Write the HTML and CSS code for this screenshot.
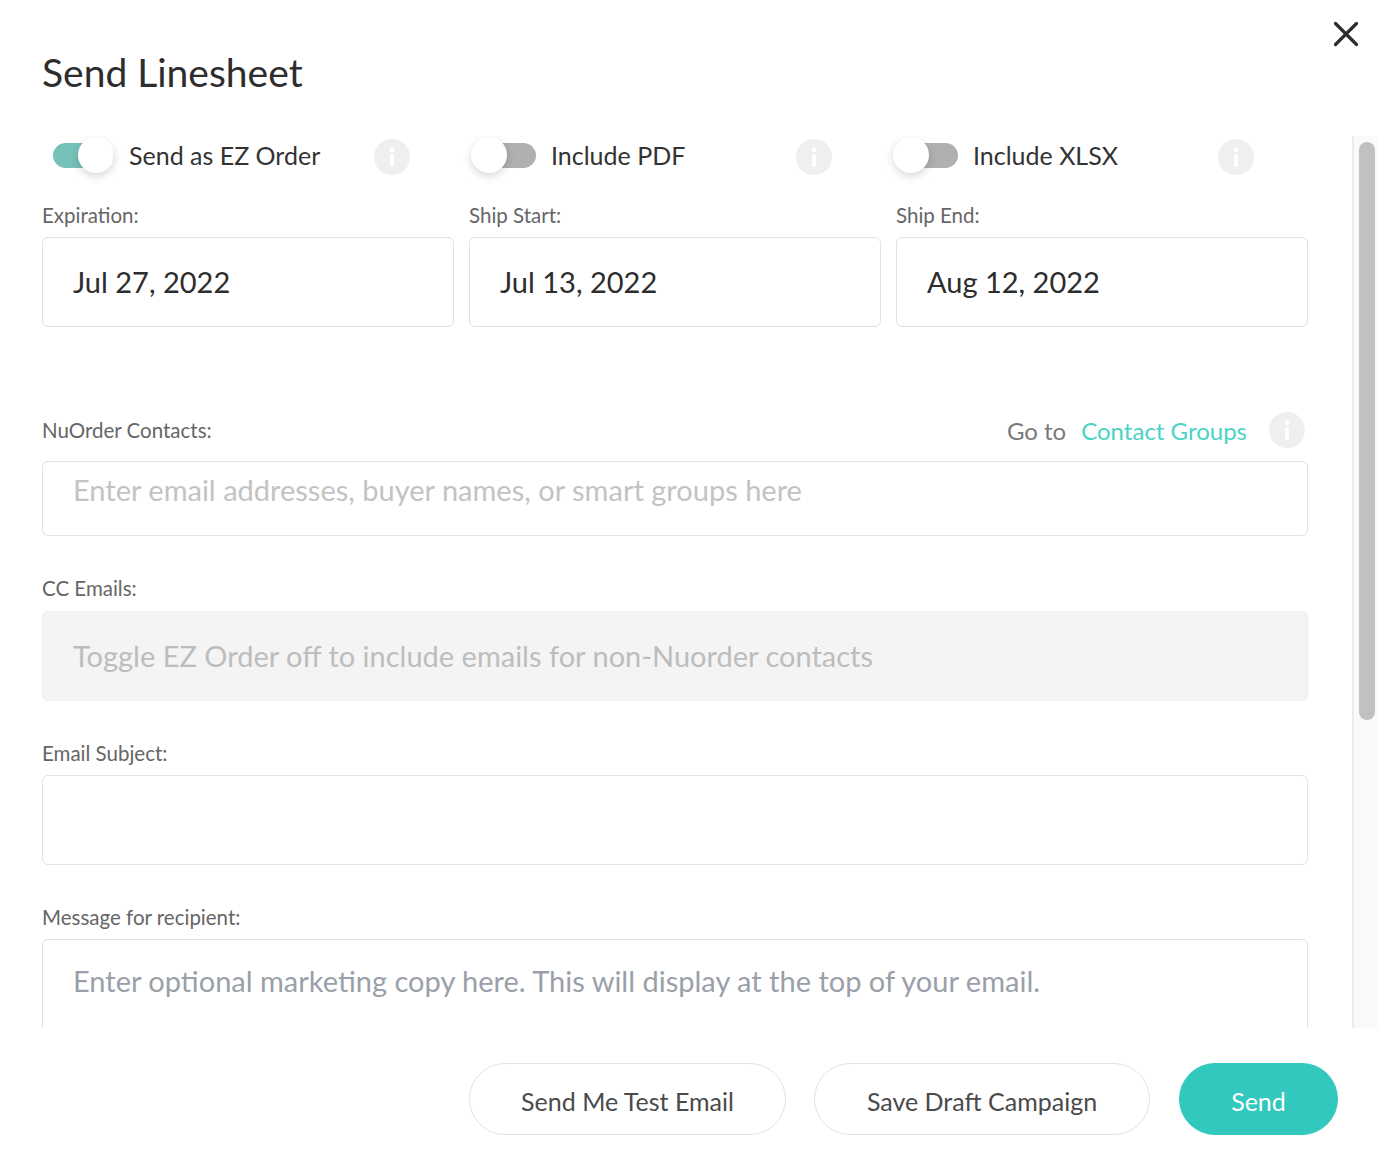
FILE: index.html
```html
<!DOCTYPE html>
<html lang="en">
<head>
<meta charset="utf-8">
<title>Send Linesheet</title>
<link rel="stylesheet" href="styles.css">
</head>
<body>
<div class="modal">
  <button class="close" aria-label="Close">
    <svg width="26" height="26" viewBox="0 0 26 26"><path d="M2.5 2.5 23.5 23.5M23.5 2.5 2.5 23.5" stroke="#2d2d2d" stroke-width="3.2" fill="none" stroke-linecap="round"/></svg>
  </button>
  <h1 class="title">Send Linesheet</h1>
  <div class="scroller">
    <div class="content">
      <div class="toggles">
        <div class="toggle-item">
          <span class="switch on"><span class="knob"></span></span>
          <span class="toggle-label">Send as EZ Order</span>
          <span class="info"><svg width="8" height="20" viewBox="0 0 8 20"><circle cx="4" cy="3" r="2.4" fill="#fff"/><rect x="2" y="7.5" width="4" height="12" fill="#fff"/></svg></span>
        </div>
        <div class="toggle-item">
          <span class="switch"><span class="knob"></span></span>
          <span class="toggle-label">Include PDF</span>
          <span class="info"><svg width="8" height="20" viewBox="0 0 8 20"><circle cx="4" cy="3" r="2.4" fill="#fff"/><rect x="2" y="7.5" width="4" height="12" fill="#fff"/></svg></span>
        </div>
        <div class="toggle-item">
          <span class="switch"><span class="knob"></span></span>
          <span class="toggle-label">Include XLSX</span>
          <span class="info"><svg width="8" height="20" viewBox="0 0 8 20"><circle cx="4" cy="3" r="2.4" fill="#fff"/><rect x="2" y="7.5" width="4" height="12" fill="#fff"/></svg></span>
        </div>
      </div>
      <div class="dates">
        <div><div class="label">Expiration:</div><div class="box date">Jul 27, 2022</div></div>
        <div><div class="label">Ship Start:</div><div class="box date">Jul 13, 2022</div></div>
        <div><div class="label">Ship End:</div><div class="box date">Aug 12, 2022</div></div>
      </div>
      <div class="contacts-head">
        <div class="label">NuOrder Contacts:</div>
        <div class="goto">
          <span class="goto-text">Go to</span>
          <a class="goto-link">Contact Groups</a>
          <span class="info"><svg width="8" height="20" viewBox="0 0 8 20"><circle cx="4" cy="3" r="2.4" fill="#fff"/><rect x="2" y="7.5" width="4" height="12" fill="#fff"/></svg></span>
        </div>
      </div>
      <div class="box contacts">Enter email addresses, buyer names, or smart groups here</div>
      <div class="label cc-label">CC Emails:</div>
      <div class="box disabled">Toggle EZ Order off to include emails for non-Nuorder contacts</div>
      <div class="label subject-label">Email Subject:</div>
      <div class="box subject"></div>
      <div class="label message-label">Message for recipient:</div>
      <div class="box message">Enter optional marketing copy here. This will display at the top of your email.</div>
    </div>
    <div class="scrolltrack"><div class="thumb"></div></div>
  </div>
  <div class="footer">
    <button class="btn test">Send Me Test Email</button>
    <button class="btn draft">Save Draft Campaign</button>
    <button class="btn send">Send</button>
  </div>
</div>
</body>
</html>
```
FILE: styles.css
```css
* { box-sizing: border-box; }
html, body { margin: 0; padding: 0; background: #fff; }
body { font-family: "Lato", "Liberation Sans", sans-serif; color: #2d2d2d; }
.modal { position: relative; width: 1378px; height: 1168px; overflow: hidden; }
.close { position: absolute; top: 21px; right: 19px; width: 26px; height: 26px; padding: 0; border: 0; background: none; display: block; }
.close svg { display: block; }
.title { margin: 0; padding: 49px 0 0 42px; height: 136px; font-size: 39px; line-height: 47px; font-weight: 400; color: #2d2d2d; }
.scroller { display: flex; height: 892px; overflow: hidden; }
.content { width: 1352px; flex: none; padding-left: 42px; padding-right: 44px; }
.toggles { display: grid; grid-template-columns: repeat(3, 422px); padding: 3px 0 0 11px; height: 54px; }
.toggle-item { display: flex; align-items: flex-start; position: relative; }
.switch { position: relative; display: block; flex: none; width: 61px; height: 25px; margin-top: 4px; border-radius: 13px; background: #b1afaf; }
.switch.on { background: #76c2b8; }
.knob { position: absolute; top: -6px; left: -4px; width: 36px; height: 36px; border-radius: 50%; background: #fff; box-shadow: 0 3px 8px rgba(0,0,0,.16); }
.switch.on .knob { left: 25px; }
.toggle-label { margin-left: 15px; font-size: 25px; line-height: 32px; color: #333; flex: 1; }
.info { display: flex; align-items: center; justify-content: center; flex: none; width: 36px; height: 36px; border-radius: 50%; background: #efefef; }
.toggles .info { margin-right: 65px; }
.label { font-size: 20.5px; line-height: 26px; color: #666; }
.dates { display: grid; grid-template-columns: repeat(3, 412px); column-gap: 15px; padding-top: 12px; }
.dates .label { height: 35px; }
.box { border: 1px solid #e2e2e2; border-radius: 6px; font-size: 29px; background: #fff; }
.date { height: 90px; line-height: 88px; padding-left: 30px; color: #2d2d2d; }
.contacts-head { display: flex; justify-content: space-between; align-items: center; margin-top: 85px; height: 36px; padding-right: 3px; }
.goto { display: flex; align-items: center; font-size: 24px; }
.goto-text { color: #7a7a7a; }
.goto-link { color: #4bd3c7; margin-left: 15px; }
.goto .info { margin-left: 22px; }
.contacts { height: 75px; margin-top: 13px; padding: 10px 0 0 30px; line-height: 36px; color: #c3c3c3; }
.cc-label { margin-top: 39px; height: 36px; }
.disabled { height: 90px; line-height: 88px; padding-left: 30px; background: #f4f4f4; border-color: #efefef; color: #bdbdbd; }
.subject-label { margin-top: 39px; height: 35px; }
.subject { height: 90px; }
.message-label { margin-top: 39px; height: 35px; }
.message { height: 140px; padding: 22px 0 0 30px; line-height: 38px; color: #9a9fa9; }
.scrolltrack { flex: 1; background: #fafafa; border-left: 2px solid #ececec; padding: 6px 3px 0 5px; }
.thumb { height: 578px; border-radius: 8px; background: #c1c1c1; }
.footer { display: flex; justify-content: flex-end; gap: 28px; padding: 35px 40px 0 0; }
.btn { height: 72px; border-radius: 36px; border: 1px solid #e2e2e2; background: #fff; font-family: inherit; font-size: 25px; color: #4a4a4a; padding: 3px 0 0; }
.test { width: 317px; }
.draft { width: 336px; }
.send { width: 159px; margin-left: 1px; background: #32c8bd; border-color: #32c8bd; color: #fff; }
```
